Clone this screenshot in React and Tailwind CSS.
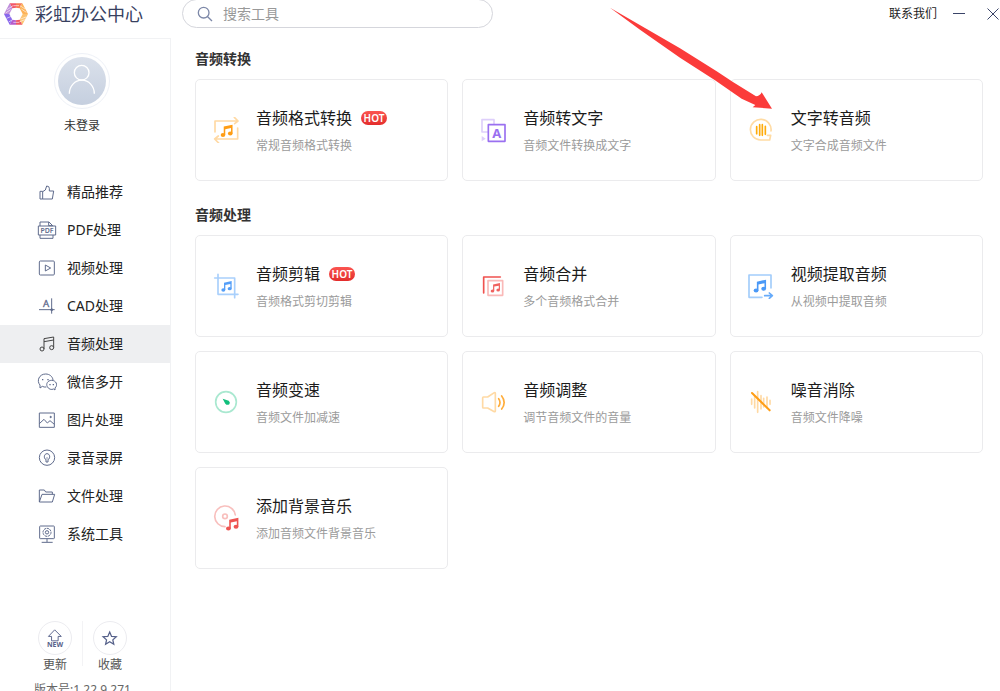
import React, { useState } from "react";

const Notes = ({ x, y, scale = 1, color }) => (
    <g transform={`translate(${x} ${y}) scale(${scale})`} fill={color} stroke="none">
        <ellipse cx="6" cy="27" rx="6" ry="5" />
        <ellipse cx="25" cy="23" rx="6" ry="5" />
        <path d="M8 27V5L31 0V23H27V9L12 12V27Z" />
    </g>
);

const Logo = () => (
    <svg viewBox="0 0 72 66" className="h-[22px] w-6 shrink-0">
        <path d="M17 1H36V14L25 16Z" fill="#f2566a" />
        <path d="M36 1H55L47 16L36 14Z" fill="#f77b55" />
        <path d="M55 1L72 33H56L47 16Z" fill="#fdb257" />
        <path d="M72 33L55 65L47 50L56 33Z" fill="#fcc372" />
        <path d="M55 65H36V52L47 50Z" fill="#ee5862" />
        <path d="M36 65H17L25 50L36 52Z" fill="#b75ccb" />
        <path d="M17 65L0 33H16L25 50Z" fill="#8a68ec" />
        <path d="M0 33L17 1L25 16L16 33Z" fill="#c08fdc" />
        <path d="M9 20L27 8M5 30L20 20M48 8L63 18M52 18L67 28M8 46L22 40M14 57L26 50M46 57L62 50M50 48L66 42M28 8H45M28 58H45" stroke="#fff" strokeWidth="3" opacity="0.6" />
    </svg>
);

const menuItems = [
    {
        name: "精品推荐",
        icon: <path d="M9 28H17V51H9ZM17 29L25 24L29 12Q37 12 37 19V27H50L46 51H17" />,
    },
    {
        name: "PDF处理",
        icon: (
            <>
                <path d="M9 18V6H36L47 17V18M35 6V17H47M9 45V55H48V45" />
                <rect x="4" y="18" width="52" height="27" />
                <text x="30" y="39" textAnchor="middle" fontSize="21" fontWeight="600" fill="currentColor" stroke="none">PDF</text>
            </>
        ),
    },
    {
        name: "视频处理",
        icon: (
            <>
                <rect x="7" y="9" width="45" height="42" rx="3" />
                <path d="M25 21L41 30L25 39Z" />
            </>
        ),
    },
    {
        name: "CAD处理",
        icon: (
            <>
                <text x="27" y="34" textAnchor="middle" fontSize="29" fill="currentColor" strokeWidth="1">A</text>
                <path d="M6 41H53M44 7V53" />
                <circle cx="44" cy="41" r="3" fill="currentColor" />
            </>
        ),
    },
    {
        name: "音频处理",
        icon: (
            <>
                <circle cx="15" cy="45" r="6" />
                <circle cx="44" cy="41" r="6" />
                <path d="M21 45V14L50 9V41M21 23L50 18" />
            </>
        ),
    },
    {
        name: "微信多开",
        icon: (
            <>
                <path d="M28 45Q21 46 16 43L9 48V39C-2 27 6 6 26 6C38 6 47 14 48 24" />
                <path d="M50 51L54 54V48C64 39 57 25 44 25C32 25 26 36 31 44C35 52 43 54 50 51Z" />
                <path d="M17 21V25M33 21V25M39 36V40M49 36V40" strokeWidth="4" />
            </>
        ),
    },
    {
        name: "图片处理",
        icon: (
            <>
                <rect x="7" y="9" width="45" height="43" />
                <path d="M7 41L21 28L31 39L39 32L52 43" />
                <circle cx="41" cy="21" r="2" fill="currentColor" />
            </>
        ),
    },
    {
        name: "录音录屏",
        icon: (
            <>
                <circle cx="30" cy="29" r="23" />
                <path d="M27 35C19 31 21 17 30 17C39 17 41 31 33 35V42H27Z" />
                <path d="M30 27V35" strokeWidth="2" />
            </>
        ),
    },
    {
        name: "文件处理",
        icon: <path d="M7 48V12H22L26 18H46V25M7 48L15 25H53L46 48Z" />,
    },
    {
        name: "系统工具",
        icon: (
            <>
                <rect x="8" y="6" width="44" height="38" rx="2" />
                <circle cx="30" cy="25" r="12" strokeDasharray="7 2" />
                <circle cx="30" cy="25" r="5" />
                <path d="M30 44V54M14 55H47" />
            </>
        ),
    },
];

const sections = [
    {
        title: "音频转换",
        tools: [
            {
                name: "音频格式转换",
                desc: "常规音频格式转换",
                hot: true,
                icon: (
                    <>
                        <path d="M6 45V12H74M64 1L75 12L65 20M74 33V66H6M16 57L5 66L17 78" stroke="#ffd9a3" />
                        <Notes x={23} y={23} scale={1.15} color="#ff9d14" />
                    </>
                ),
            },
            {
                name: "音频转文字",
                desc: "音频文件转换成文字",
                icon: (
                    <>
                        <rect x="6" y="8" width="36" height="37" stroke="#decffb" />
                        <path d="M5 57L17 65L5 73Z" fill="#decffb" stroke="none" />
                        <rect x="25" y="23" width="50" height="50" fill="#fff" stroke="#9a70f0" />
                        <text x="50" y="62" textAnchor="middle" fontSize="39" fontWeight="700" fill="#9a70f0" stroke="none">A</text>
                    </>
                ),
            },
            {
                name: "文字转音频",
                desc: "文字合成音频文件",
                icon: (
                    <>
                        <path d="M69 42A31 31 0 1 0 38 69H65L68 55H58" stroke="#ffdba3" />
                        <path d="M26 29V50M35 23V55M43 23V55M52 28V52" stroke="#ffab0a" />
                    </>
                ),
            },
        ],
    },
    {
        title: "音频处理",
        tools: [
            {
                name: "音频剪辑",
                desc: "音频格式剪切剪辑",
                hot: true,
                icon: (
                    <>
                        <path d="M15 4V64H75M5 15H65V74" stroke="#a9d0fc" />
                        <Notes x={25} y={24} color="#559ff8" />
                    </>
                ),
            },
            {
                name: "音频合并",
                desc: "多个音频格式合并",
                icon: (
                    <>
                        <path d="M11 60V12H61" stroke="#f0524f" />
                        <rect x="24" y="23" width="44" height="44" stroke="#fab9b8" />
                        <Notes x={32} y={30} scale={0.9} color="#f0625f" />
                    </>
                ),
            },
            {
                name: "视频提取音频",
                desc: "从视频中提取音频",
                icon: (
                    <>
                        <path d="M42 73H3V6H69V45" stroke="#a3cdfb" />
                        <Notes x={17} y={20} scale={1.2} color="#4a99f7" />
                        <path d="M50 68H72M64 60L73 68L64 76" stroke="#67abfa" />
                    </>
                ),
            },
            {
                name: "音频变速",
                desc: "音频文件加减速",
                icon: (
                    <>
                        <circle cx="39" cy="39" r="31" stroke="#a9e8d0" />
                        <path d="M29 29L47 35Q53 40 49 46Q42 50 37 44Z" fill="#12bf7c" stroke="none" />
                    </>
                ),
            },
            {
                name: "音频调整",
                desc: "调节音频文件的音量",
                icon: (
                    <>
                        <path d="M8 26Q8 24 10 24H23L43 11Q46 10 46 13V66Q46 69 43 68L23 57H10Q8 57 8 55Z" stroke="#ffdaa5" />
                        <path d="M56 29Q64 40 56 52M65 21Q80 40 65 60" stroke="#ffad3b" />
                    </>
                ),
            },
            {
                name: "噪音消除",
                desc: "音频文件降噪",
                icon: (
                    <>
                        <path d="M11 30V46M20 22V57M29 8V70M39 20V60M47 28V54M57 24V56M66 34V46" stroke="#ffd9a3" />
                        <path d="M12 12L65 64" stroke="#ff9d14" strokeWidth="6" />
                    </>
                ),
            },
            {
                name: "添加背景音乐",
                desc: "添加音频文件背景音乐",
                icon: (
                    <>
                        <path d="M67 30A31 31 0 1 0 36 65" stroke="#f8bfbd" />
                        <circle cx="36" cy="34" r="7" stroke="#f8bfbd" />
                        <Notes x={39} y={38} scale={1.2} color="#ee5552" />
                    </>
                ),
            },
        ],
    },
];

const ToolCard = ({ tool }) => (
    <button className="flex h-[102px] items-center gap-[17px] rounded-[5px] border border-[#ebebed] bg-white px-[17px] text-left">
        <svg viewBox="0 0 78 78" className="size-[26px] shrink-0" fill="none" strokeWidth="5" strokeLinecap="round" strokeLinejoin="round">
            {tool.icon}
        </svg>
        <span className="flex flex-col gap-2">
            <span className="flex items-center gap-[9px] text-base leading-6 text-[#1c1c1c]">
                {tool.name}
                {tool.hot && (
                    <span className="flex h-[14px] w-[26px] items-center justify-center rounded-full bg-linear-to-b from-[#fb5450] to-[#e32c2b] text-[10px] font-semibold text-white">
                        HOT
                    </span>
                )}
            </span>
            <span className="text-xs leading-4 text-[#9b9b9b]">{tool.desc}</span>
        </span>
    </button>
);

const Header = () => (
    <header className="flex h-7 shrink-0 items-center">
        <div className="flex w-[182px] shrink-0 items-center gap-[7px] pl-1">
            <Logo />
            <h1 className="text-lg leading-7 text-[#38415f]">彩虹办公中心</h1>
        </div>
        <label className="-mt-px flex w-[311px] items-center gap-[10px] self-stretch rounded-full border border-[#d5d6dc] px-[14px]">
            <svg viewBox="0 0 48 48" className="size-4 shrink-0" fill="none" stroke="#7d88a8" strokeWidth="4">
                <circle cx="20" cy="20" r="16" />
                <path d="M32 32L45 45" />
            </svg>
            <input type="text" aria-label="搜索工具" placeholder="搜索工具" className="w-full text-sm leading-5 outline-none placeholder:text-[#999]" />
        </label>
        <div className="ml-auto flex items-center">
            <a href="#contact" className="text-xs text-[#222]">联系我们</a>
            <button aria-label="最小化" className="ml-4">
                <svg viewBox="0 0 12 12" className="size-3" stroke="#3a4468">
                    <path d="M0 5.5H12" />
                </svg>
            </button>
            <button aria-label="关闭" className="mr-px ml-[22px]">
                <svg viewBox="0 0 12 12" className="size-3" stroke="#3a4468">
                    <path d="M0.5 0.5L11.5 11.5M11.5 0.5L0.5 11.5" />
                </svg>
            </button>
        </div>
    </header>
);

const Sidebar = () => {
    const [active, setActive] = useState("音频处理");

    return (
        <aside className="mt-[10px] flex w-[171px] shrink-0 flex-col border-t border-r border-[#f1f2f4] pt-[14px]">
            <button className="flex flex-col items-center gap-2 self-center pr-[6px] text-xs leading-[18px] text-[#333]">
                <span className="flex size-14 items-center justify-center rounded-full border border-[#eef1f7]">
                    <svg viewBox="0 0 144 144" className="size-12 rounded-full bg-linear-to-b from-[#dbe1eb] to-[#c5cfdf]" fill="none" stroke="#fff" strokeWidth="4">
                        <circle cx="71" cy="47" r="22" />
                        <path d="M34 110A37 40 0 0 1 109 110" />
                    </svg>
                </span>
                未登录
            </button>
            <nav className="mt-[38px] flex flex-col">
                {menuItems.map((item) => (
                    <button
                        key={item.name}
                        onClick={() => setActive(item.name)}
                        className={`flex h-[38px] items-center gap-[10px] pl-[37px] text-sm text-[#222] ${active === item.name ? "bg-[#eeeff1]" : ""}`}
                    >
                        <svg
                            viewBox="0 0 60 60"
                            className={`size-5 shrink-0 ${active === item.name ? "text-[#444]" : "text-[#5f6b8c]"}`}
                            fill="none"
                            stroke="currentColor"
                            strokeWidth="3"
                            strokeLinejoin="round"
                        >
                            {item.icon}
                        </svg>
                        {item.name}
                    </button>
                ))}
            </nav>
            <div className="mt-17 flex pl-[38px] text-xs leading-[18px] text-[#555]">
                <button className="flex flex-col items-center gap-px">
                    <svg viewBox="0 0 102 102" className="size-[34px] rounded-full border border-[#ececf0]" fill="none" stroke="#56618a" strokeWidth="3">
                        <path d="M50 25L30 46H40V60H61V46H71Z" />
                        <text x="51" y="79" textAnchor="middle" fontSize="22" fontWeight="700" fill="#56618a" stroke="none">NEW</text>
                    </svg>
                    更新
                </button>
                <div className="mx-[10px] mb-2 w-px bg-[#f3f3f5]"></div>
                <button className="flex flex-col items-center gap-px">
                    <svg viewBox="0 0 102 102" className="size-[34px] rounded-full border border-[#ececf0]" fill="none" stroke="#56618a" strokeWidth="4">
                        <path d="M50 32L56 46L71 47L60 57L63 71L50 63L37 71L40 57L29 47L44 46Z" />
                    </svg>
                    收藏
                </button>
            </div>
            <p className="mt-2 pl-[34px] text-xs leading-4 text-[#666]">版本号:1.22.9.271</p>
        </aside>
    );
};

const App = () => {
    return (
        <div className="relative flex h-screen flex-col overflow-hidden bg-white font-['Noto_Sans','Noto_Sans_CJK_SC',sans-serif]">
            <Header />
            <div className="flex min-h-0 flex-1">
                <Sidebar />
                <main className="flex flex-1 flex-col gap-6 pt-[21px] pr-[17px] pl-6">
                    {sections.map((section) => (
                        <section key={section.title}>
                            <h2 className="mb-[10px] text-sm leading-5 font-bold text-[#333]">{section.title}</h2>
                            <div className="grid grid-cols-3 gap-[14px]">
                                {section.tools.map((tool) => (
                                    <ToolCard key={tool.name} tool={tool} />
                                ))}
                            </div>
                        </section>
                    ))}
                </main>
            </div>
            {/* pointer to the text-to-audio tool */}
            <svg viewBox="0 0 516 330" className="pointer-events-none absolute top-0 left-[600px] h-[110px] w-[172px]" fill="#fb3b3a">
                <path d="M30 23L240 145L350 214L400 247L468 289Q480 288 485 277L516 326L458 322L466 315L425 296L345 241L240 173L120 89Z" />
            </svg>
        </div>
    );
};

export default App;
